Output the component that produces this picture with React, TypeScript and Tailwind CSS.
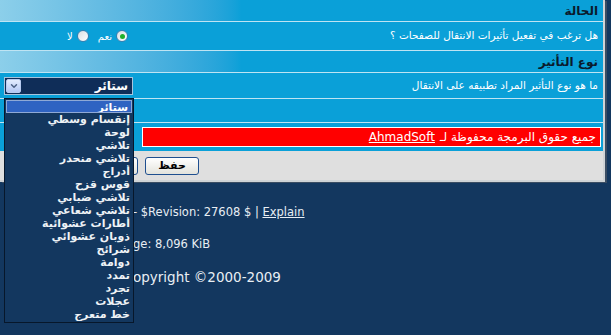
import { ChevronDown } from "lucide-react";

const effects = [
  "ستائر",
  "إنقسام وسطي",
  "لوحة",
  "تلاشي",
  "تلاشي منحدر",
  "أدراج",
  "قوس قزح",
  "تلاشي ضبابي",
  "تلاشي شعاعي",
  "أطارات عشوائية",
  "ذوبان عشوائي",
  "شرائح",
  "دوامة",
  "تمدد",
  "تجرد",
  "عجلات",
  "خط متعرج",
];

function Radio({ checked }: { checked?: boolean }) {
  return (
    <span className="flex size-[12px] items-center justify-center rounded-full border border-[#3a7fb0] bg-linear-to-br from-[#d9dfe3] to-white">
      {checked && <span className="size-[5px] rounded-full bg-[#22b02c]" />}
    </span>
  );
}

function HeaderRow({ title }: { title: string }) {
  return (
    <div className="flex h-[22px] items-center border-b border-[#bfe4f3] bg-linear-to-l from-[#0aa0d8] via-[#0aa0d8] via-60% to-[#8ccfea] pr-[5px]">
      <span className="text-[12px] font-bold text-[#0b1a2c]">{title}</span>
    </div>
  );
}

export default function App() {
  return (
    <div className="relative h-[335px] w-[611px] overflow-hidden bg-[#13375f] font-['DejaVu_Sans',Tahoma,sans-serif]">
      <div
        dir="rtl"
        className="w-[605px] border-r-2 border-b-2 border-[#cfd3d6] shadow-[2px_1px_0_#3a4d63]"
      >
        <HeaderRow title="الحالة" />

        <div className="flex h-[29px] items-center justify-between border-b border-[#bfe4f3] bg-[#0aa0d8]">
          <span className="pr-[5px] text-[10.5px] text-white">
            هل ترغب في تفعيل تأثيرات الانتقال للصفحات ؟
          </span>
          <div className="flex w-[137px] items-center gap-[4px] pr-[9px] text-[10px] text-white">
            <Radio checked />
            <span className="ml-[5px]">نعم</span>
            <Radio />
            <span>لا</span>
          </div>
        </div>

        <HeaderRow title="نوع التأثير" />

        <div className="flex h-[26px] items-center justify-between border-b border-[#bfe4f3] bg-[#0aa0d8]">
          <span className="pr-[5px] text-[10.5px] text-white">
            ما هو نوع التأثير المراد تطبيقه على الانتقال
          </span>
          <div className="flex w-[137px] justify-start pr-[4px]">
            <div className="flex h-[18px] w-[129px] items-center border border-[#a7c4dd] bg-[#0f2d58]">
              <span className="flex-1 pr-[4px] text-[12px] font-bold text-white">ستائر</span>
              <span className="m-px flex h-[14px] w-[15px] items-center justify-center rounded-[2px] border border-[#b7cbf0] bg-linear-to-b from-[#e3ecfd] to-[#b4c8f4]">
                <ChevronDown size={10} strokeWidth={3.5} className="text-[#4d6185]" />
              </span>
            </div>
          </div>
        </div>

        <div className="h-[24px] border-b border-[#bfe4f3] bg-[#0aa0d8]" />

        <div className="flex h-[28px] items-center bg-[#0aa0d8] pr-[2px]">
          <div className="flex h-[20px] w-[459px] items-center border border-white bg-[#ff0000] pr-[4px] text-[12px] text-white">
            جميع حقوق البرمجة محفوظة لـ{" "}
            <span className="mr-[5px] underline">AhmadSoft</span>
          </div>
        </div>

        <div
          dir="ltr"
          className="flex h-[29px] items-center gap-[7px] bg-[#dfdfdf] pl-[84px]"
        >
          <button
            type="button"
            aria-label="إعادة"
            className="h-[18px] w-[54px] rounded-[3px] border border-[#1f4f8f] bg-linear-to-b from-white to-[#e3e3dc]"
          />
          <button
            type="button"
            className="h-[18px] w-[54px] rounded-[3px] border border-[#1f4f8f] bg-linear-to-b from-white to-[#e3e3dc] text-[11px] font-bold text-black"
          >
            حفظ
          </button>
        </div>
      </div>

      <div className="flex flex-col pl-[133px] pt-[21px] text-[#e8eef4]">
        <p className="h-[19px] text-[11.5px] leading-[19px]">
          - $Revision: 27608 $ | <span className="underline">Explain</span>
        </p>
        <p className="mt-[13px] h-[19px] text-[11.5px] leading-[19px]">ge: 8,096 KiB</p>
        <p className="mt-[13px] h-[20px] text-[13.5px] leading-[20px]">opyright ©2000-2009</p>
      </div>

      <ul
        dir="rtl"
        className="absolute left-[4px] top-[98px] w-[130px] border border-[#07172b] bg-[#13375f] py-px"
      >
        {effects.map((e, i) => (
          <li
            key={e}
            className={
              "h-[13px] overflow-hidden pr-[3px] text-[11px] font-bold leading-[13px] text-[#eef2f6] " +
              (i === 0 ? "mx-px border border-[#8fa9d6] bg-[#2f63c2] leading-[11px] text-white" : "")
            }
          >
            {e}
          </li>
        ))}
      </ul>
    </div>
  );
}
